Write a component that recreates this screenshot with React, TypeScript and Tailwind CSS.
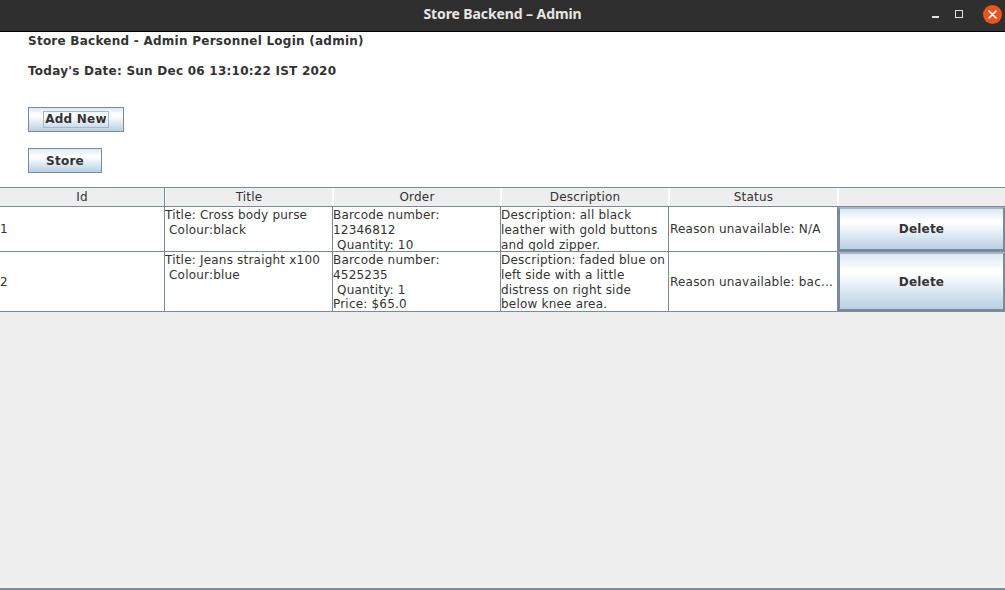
import React from "react";

const font = { fontFamily: '"DejaVu Sans", "Liberation Sans", sans-serif' };

const btnGrad =
  "bg-[linear-gradient(to_bottom,#dde8f3_0%,#ffffff_30%,#ffffff_35%,#b8cfe5_100%)]";

function Cell({
  children,
  w,
  className = "",
}: {
  children?: React.ReactNode;
  w: string;
  className?: string;
}) {
  return <div className={`${w} shrink-0 overflow-hidden ${className}`}>{children}</div>;
}

export default function App() {
  const widths = ["w-[165px]", "w-[168px]", "w-[168px]", "w-[168px]", "w-[169px]", "w-[167px]"];
  const headers = ["Id", "Title", "Order", "Description", "Status", ""];
  return (
    <div className="w-[1005px] h-[590px] flex flex-col bg-[#eeeeee] overflow-hidden" style={font}>
      {/* Title bar */}
      <div className="h-[32px] shrink-0 bg-[#2f2f2f] border-b border-black relative flex items-center justify-center pb-[4px]">
        <span
          className="text-[#e8e6e3] font-bold text-[14px] tracking-[-0.1px]"
          style={{ fontFamily: '"Noto Sans", "DejaVu Sans", sans-serif' }}
        >
          Store Backend – Admin
        </span>
        <div className="absolute right-[3px] top-[3px] flex items-center h-[22px]">
          <div className="w-[22px] h-[22px] flex items-center justify-center mr-[2px]">
            <div className="w-[7px] h-[2px] bg-[#e0e0e0] mt-[5px]" />
          </div>
          <div className="w-[22px] h-[22px] flex items-center justify-center mr-[13px]">
            <div className="w-[8px] h-[8px] border border-[#e0e0e0]" />
          </div>
          <div className="w-[19px] h-[19px] rounded-full bg-[#e95420] flex items-center justify-center">
            <svg width="9" height="9" viewBox="0 0 9 9">
              <path d="M1 1L8 8M8 1L1 8" stroke="#ffffff" strokeWidth="1.6" strokeLinecap="round" />
            </svg>
          </div>
        </div>
      </div>

      {/* Top panel */}
      <div className="h-[155px] shrink-0 bg-white pl-[28px] text-[12px] font-bold text-[#333333] flex flex-col tracking-[0.25px]">
        <div className="h-[17px] leading-[17px] mt-[1px]">Store Backend - Admin Personnel Login (admin)</div>
        <div className="h-[17px] leading-[17px] mt-[13px]">Today's Date: Sun Dec 06 13:10:22 IST 2020</div>
        <div
          className={`mt-[27px] w-[96px] h-[25px] border border-[#7a8a99] ${btnGrad} flex items-center justify-center`}
        >
          <span className="border border-[#a3b8cc] px-[1px] leading-[15px] h-[17px]">Add New</span>
        </div>
        <div
          className={`mt-[16px] w-[74px] h-[25px] border border-[#7a8a99] ${btnGrad} flex items-center justify-center`}
        >
          Store
        </div>
      </div>

      {/* Table */}
      <div className="flex flex-col text-[12px] text-[#333333] tracking-[0.2px]">
        <div className="flex h-[20px] bg-[#eeeeee] border-t border-b border-[#7a8a99]">
          {headers.map((h, i) => (
            <Cell
              key={i}
              w={widths[i]}
              className={`flex items-center justify-center leading-[18px] ${i < 5 ? "border-r border-[#7a8a99]" : ""} ${i === 0 ? "" : "border-l border-white"}`}
            >
              {h}
            </Cell>
          ))}
        </div>

        {[
          {
            id: "1",
            title: ["Title: Cross body purse", " Colour:black"],
            order: ["Barcode number:", "12346812", " Quantity: 10"],
            desc: ["Description: all black", "leather with gold buttons", "and gold zipper."],
            status: "Reason unavailable: N/A",
            h: "h-[45px]",
          },
          {
            id: "2",
            title: ["Title: Jeans straight x100", " Colour:blue"],
            order: ["Barcode number:", "4525235", " Quantity: 1", "Price: $65.0"],
            desc: [
              "Description: faded blue on",
              "left side with a little",
              "distress on right side",
              "below knee area.",
            ],
            status: "Reason unavailable: bac...",
            h: "h-[60px]",
          },
        ].map((r, ri) => (
          <div key={ri} className={`flex ${r.h} bg-white border-b border-[#7a8a99]`}>
            <Cell w={widths[0]} className="border-r border-[#7a8a99] flex items-center pl-[0px]">
              {r.id}
            </Cell>
            <Cell w={widths[1]} className="border-r border-[#7a8a99] leading-[14.75px] pt-[1px] whitespace-pre">
              {r.title.map((t, i) => (
                <div key={i}>{t}</div>
              ))}
            </Cell>
            <Cell w={widths[2]} className="border-r border-[#7a8a99] leading-[14.75px] pt-[1px] whitespace-pre">
              {r.order.map((t, i) => (
                <div key={i}>{t}</div>
              ))}
            </Cell>
            <Cell w={widths[3]} className="border-r border-[#7a8a99] leading-[14.75px] pt-[1px] whitespace-pre">
              {r.desc.map((t, i) => (
                <div key={i}>{t}</div>
              ))}
            </Cell>
            <Cell w={widths[4]} className="border-r border-[#7a8a99] flex items-center pl-[1px] whitespace-pre">
              {r.status}
            </Cell>
            <Cell w={widths[5]} className="flex">
              <div
                className={`flex-1 border-[2px] border-[#7a8a99] border-t-[#a8b6c4] ${btnGrad} flex items-center justify-center font-bold`}
              >
                Delete
              </div>
            </Cell>
          </div>
        ))}
      </div>

      <div className="flex-1" />
      <div className="h-[2px] bg-[#7a8a99] shrink-0" />
    </div>
  );
}
